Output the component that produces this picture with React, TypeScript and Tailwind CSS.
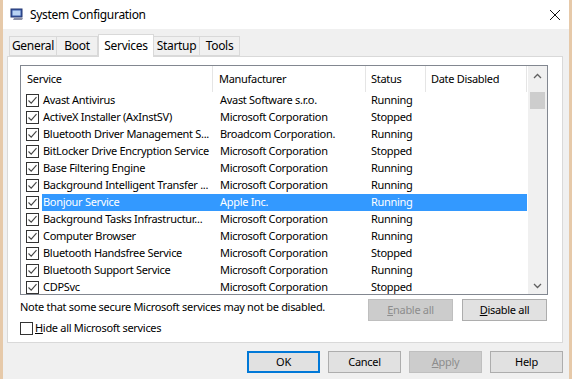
import { ReactNode } from "react";

// Windows 10 msconfig dialog, Services tab
const rows = [
  { name: "Avast Antivirus", maker: "Avast Software s.r.o.", status: "Running" },
  { name: "ActiveX Installer (AxInstSV)", maker: "Microsoft Corporation", status: "Stopped" },
  { name: "Bluetooth Driver Management S...", maker: "Broadcom Corporation.", status: "Running" },
  { name: "BitLocker Drive Encryption Service", maker: "Microsoft Corporation", status: "Stopped" },
  { name: "Base Filtering Engine", maker: "Microsoft Corporation", status: "Running" },
  { name: "Background Intelligent Transfer ...", maker: "Microsoft Corporation", status: "Running" },
  { name: "Bonjour Service", maker: "Apple Inc.", status: "Running", selected: true },
  { name: "Background Tasks Infrastructur...", maker: "Microsoft Corporation", status: "Running" },
  { name: "Computer Browser", maker: "Microsoft Corporation", status: "Running" },
  { name: "Bluetooth Handsfree Service", maker: "Microsoft Corporation", status: "Stopped" },
  { name: "Bluetooth Support Service", maker: "Microsoft Corporation", status: "Running" },
  { name: "CDPSvc", maker: "Microsoft Corporation", status: "Stopped" },
];

const tabs = [
  { t: "General", w: "w-[48px]" },
  { t: "Boot", w: "w-[42px]" },
  { t: "Services", w: "w-[56px]" },
  { t: "Startup", w: "w-[47px]" },
  { t: "Tools", w: "w-[41px]" },
];

function CheckBox({ checked }: { checked?: boolean }) {
  return (
    <div className="w-[13px] h-[13px] border border-[#333] bg-white flex items-center justify-center shrink-0">
      {checked && (
        <svg width="11" height="11" viewBox="0 0 11 11">
          <path d="M1.5 5.5 L4.2 8.2 L9.5 2.2" fill="none" stroke="#444" strokeWidth="1.1" />
        </svg>
      )}
    </div>
  );
}

function Button({ children, disabled, primary, w = "w-[73px]" }: { children: ReactNode; disabled?: boolean; primary?: boolean; w?: string }) {
  const cls = disabled
    ? "bg-[#cccccc] border-[#bfbfbf] text-[#8d8d8d]"
    : primary
    ? "bg-[#e1e1e1] border-[#0078d7] border-2 text-black"
    : "bg-[#e1e1e1] border-[#adadad] text-black";
  return (
    <div className={`${w} h-[22px] border flex items-center justify-center text-[11px] shrink-0 ${cls}`}>{children}</div>
  );
}

export default function App() {
  return (
    <div className="w-[572px] h-[379px] bg-[#e6c9a9] pl-[3px] pr-[3px] overflow-hidden tracking-[-0.3px]" style={{ fontFamily: '"Noto Sans", "Segoe UI", sans-serif' }}>
      <div className="w-[566px] h-[379px] bg-[#f0f0f0] flex flex-col">
        {/* Title bar */}
        <div className="h-[29px] bg-white flex items-center shrink-0">
          <svg width="14" height="14" viewBox="0 0 14 14" className="ml-[7px]">
            <rect x="1" y="1" width="11" height="8" fill="#3b5aa8" stroke="#203570" />
            <rect x="2.5" y="2.5" width="8" height="5" fill="#b9d3f3" />
            <path d="M3 12 L12 12 L13 10 L4 10 Z" fill="#8a8fa6" />
          </svg>
          <span className="ml-[6px] text-[12px] text-black">System Configuration</span>
          <svg width="12" height="12" viewBox="0 0 12 12" className="ml-auto mr-[8px]">
            <path d="M1 1 L11 11 M11 1 L1 11" stroke="#111" strokeWidth="1" />
          </svg>
        </div>

        {/* Tabs */}
        <div className="flex items-end h-[27px] pl-[7px] shrink-0">
          {tabs.map(({ t, w }) =>
            t === "Services" ? (
              <div key={t} className={`${w} h-[23px] -mb-px bg-white border border-b-0 border-[#d9d9d9] text-[12px] flex items-center justify-center relative z-10`}>
                {t}
              </div>
            ) : (
              <div key={t} className={`${w} h-[20px] bg-[#f0f0f0] border border-[#d9d9d9] -ml-px text-[12px] flex items-center justify-center`}>
                {t}
              </div>
            )
          )}
        </div>

        {/* Tab panel */}
        <div className="ml-[4px] mr-[6px] h-[287px] bg-white border border-[#d9d9d9] pl-[12px] pr-[14px] pt-[8px] flex flex-col shrink-0">
          {/* List view */}
          <div className="h-[230px] border border-[#828790] flex overflow-hidden shrink-0">
            <div className="flex-1 flex flex-col overflow-hidden">
              <div className="h-[26px] flex text-[11px] text-black shrink-0">
                <div className="w-[192px] pl-[6px] border-r border-[#e5e5e5] flex items-center shrink-0">Service</div>
                <div className="w-[153px] pl-[6px] border-r border-[#e5e5e5] flex items-center shrink-0">Manufacturer</div>
                <div className="w-[60px] pl-[5px] border-r border-[#e5e5e5] flex items-center shrink-0">Status</div>
                <div className="w-[101px] pl-[5px] border-r border-[#e5e5e5] flex items-center shrink-0">Date Disabled</div>
              </div>
              {rows.map((r) => (
                <div key={r.name} className="h-[17px] flex items-center text-[11px] shrink-0">
                  <div className="w-[21px] pl-[5px] shrink-0">
                    <CheckBox checked />
                  </div>
                  <div className={`w-[485px] h-full flex items-center whitespace-nowrap shrink-0 ${r.selected ? "bg-[#3399ff] text-white" : "text-black"}`}>
                    <div className="w-[171px] pl-[1px] overflow-hidden shrink-0">{r.name}</div>
                    <div className="w-[153px] pl-[7px] overflow-hidden shrink-0">{r.maker}</div>
                    <div className="w-[60px] pl-[5px] overflow-hidden shrink-0">{r.status}</div>
                  </div>
                </div>
              ))}
            </div>
            {/* Scrollbar */}
            <div className="w-[19px] bg-[#f0f0f0] flex flex-col items-center shrink-0">
              <div className="h-[17px] flex items-center justify-center mt-[1px]">
                <svg width="9" height="6" viewBox="0 0 9 6">
                  <path d="M1 5 L4.5 1.5 L8 5" fill="none" stroke="#606060" strokeWidth="1.3" />
                </svg>
              </div>
              <div className="w-[15px] h-[17px] bg-[#cdcdcd] mt-[8px]" />
              <div className="flex-1" />
              <div className="h-[17px] flex items-center justify-center">
                <svg width="9" height="6" viewBox="0 0 9 6">
                  <path d="M1 1 L4.5 4.5 L8 1" fill="none" stroke="#606060" strokeWidth="1.3" />
                </svg>
              </div>
            </div>
          </div>

          {/* Note and buttons */}
          <div className="flex mt-[4px]">
            <div className="flex-1 text-[11px] text-black whitespace-nowrap leading-[16px]">Note that some secure Microsoft services may not be disabled.</div>
            <div className="flex gap-[9px] mr-[1px]">
              <Button disabled w="w-[85px]">
                <span><u>E</u>nable all</span>
              </Button>
              <Button w="w-[85px]">
                <span><u>D</u>isable all</span>
              </Button>
            </div>
          </div>
          <div className="flex items-center -mt-[1px] text-[11px] text-black">
            <CheckBox />
            <span className="ml-[2px]"><u>H</u>ide all Microsoft services</span>
          </div>
        </div>

        {/* Bottom buttons */}
        <div className="flex justify-end gap-[8px] pr-[6px] mt-[8px]">
          <Button primary>OK</Button>
          <Button>Cancel</Button>
          <Button disabled>
            <span><u>A</u>pply</span>
          </Button>
          <Button>Help</Button>
        </div>
      </div>
    </div>
  );
}
